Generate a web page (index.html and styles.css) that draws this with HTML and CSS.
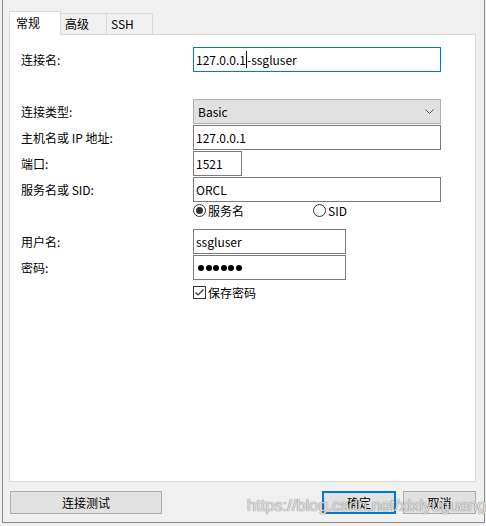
FILE: index.html
```html
<!DOCTYPE html>
<html>
<head>
<meta charset="utf-8">
<link rel="stylesheet" href="styles.css">
</head>
<body>
<div class="window">
  <div class="tabs">
    <div class="tab active">常规</div>
    <div class="tab">高级</div>
    <div class="tab">SSH</div>
  </div>
  <div class="panel">
    <div class="row r-first">
      <div class="label">连接名:</div>
      <div class="input focus w-full"><span>127.0.0.1</span><span class="caret"></span><span>-ssgluser</span></div>
    </div>
    <div class="row r-combo">
      <div class="label">连接类型:</div>
      <div class="combo w-full"><span>Basic</span>
        <svg class="chev" width="9" height="5" viewBox="0 0 9 5"><path d="M0.5 0.5 L4.5 4.5 L8.5 0.5" fill="none" stroke="#555" stroke-width="1"/></svg>
      </div>
    </div>
    <div class="row r-tight">
      <div class="label">主机名或 IP 地址:</div>
      <div class="input w-full">127.0.0.1</div>
    </div>
    <div class="row r-tight">
      <div class="label">端口:</div>
      <div class="input w-port">1521</div>
    </div>
    <div class="row r-tight">
      <div class="label">服务名或 SID:</div>
      <div class="input w-full">ORCL</div>
    </div>
    <div class="row r-radio">
      <div class="label"></div>
      <div class="radio-item first"><span class="radio on"></span><span>服务名</span></div>
      <div class="radio-item"><span class="radio"></span><span>SID</span></div>
    </div>
    <div class="row r-user">
      <div class="label">用户名:</div>
      <div class="input w-user">ssgluser</div>
    </div>
    <div class="row r-tight">
      <div class="label">密码:</div>
      <div class="input w-user pw"><i></i><i></i><i></i><i></i><i></i><i></i></div>
    </div>
    <div class="row r-check">
      <div class="label"></div>
      <div class="check-item">
        <span class="check"><svg width="11" height="11" viewBox="0 0 11 11"><path d="M1.5 5.5 L4 8 L9.5 2.5" fill="none" stroke="#333" stroke-width="1.2"/></svg></span>
        <span>保存密码</span>
      </div>
    </div>
  </div>
  <div class="buttons">
    <div class="btn btn-test">连接测试</div>
    <div class="spacer"></div>
    <div class="btn btn-ok">确定</div>
    <div class="btn btn-cancel">取消</div>
  </div>
  <div class="watermark">https://blog.csdn.net/xixiyuguang</div>
</div>
</body>
</html>
```
FILE: styles.css
```css
html, body {
  margin: 0;
  padding: 0;
  background: #f0f0f0;
}
body {
  width: 486px;
  height: 526px;
  overflow: hidden;
  font-family: "Noto Sans CJK SC", "Noto Sans", sans-serif;
  font-size: 12px;
  color: #000;
}
.window {
  position: relative;
  margin-left: 2px;
  border-left: 1px solid #8c8c8c;
  border-right: 1px solid #8c8c8c;
  border-bottom: 1px solid #8c8c8c;
  padding: 11px 8px 0 6px;
  box-sizing: content-box;
  width: 467px;
  height: 511px;
  background: #f0f0f0;
}
.tabs {
  display: flex;
  align-items: flex-end;
  height: 23px;
  position: relative;
  z-index: 2;
}
.tab {
  box-sizing: border-box;
  height: 21px;
  border: 1px solid #d9d9d9;
  border-bottom: none;
  border-left: none;
  background: #f0f0f0;
  padding-left: 4px;
  line-height: 20px;
  width: 46px;
}
.tab.active {
  height: 24px;
  margin-bottom: -1px;
  border-left: 1px solid #d9d9d9;
  background: #fff;
  width: 52px;
  padding-left: 6px;
  line-height: 21px;
}
.panel {
  box-sizing: border-box;
  width: 467px;
  height: 448px;
  border: 1px solid #d9d9d9;
  background: #fff;
  padding: 12px 0 0 11px;
  position: relative;
  z-index: 1;
}
.row {
  display: flex;
  align-items: center;
  height: 25px;
}
.r-combo { margin-top: 27px; }
.r-tight { margin-top: 1px; }
.r-radio { margin-top: 2px; height: 13px; }
.r-user { margin-top: 12px; }
.r-check { margin-top: 6px; height: 13px; }
.label {
  width: 172px;
  flex: none;
  white-space: nowrap;
}
.input, .combo {
  box-sizing: border-box;
  height: 25px;
  border: 1px solid #7a7a7a;
  background: #fff;
  display: flex;
  align-items: center;
  padding-left: 2px;
  white-space: nowrap;
}
.input.focus { border-color: #0078d7; }
.w-full { width: 248px; }
.w-port { width: 49px; }
.w-user { width: 153px; }
.caret {
  display: inline-block;
  width: 1px;
  height: 17px;
  background: #000;
}
.combo {
  background: #e1e1e1;
  border-color: #adadad;
  padding-left: 4px;
  justify-content: space-between;
  padding-right: 6px;
}
.chev { flex: none; }
.radio-item, .check-item {
  display: flex;
  align-items: center;
  gap: 2px;
}
.radio-item.first { width: 120px; }
.radio {
  box-sizing: border-box;
  width: 13px;
  height: 13px;
  border: 1px solid #333;
  border-radius: 50%;
  display: flex;
  align-items: center;
  justify-content: center;
  background: #fff;
}
.radio.on::after {
  content: "";
  width: 7px;
  height: 7px;
  border-radius: 50%;
  background: #333;
}
.check {
  box-sizing: border-box;
  width: 13px;
  height: 13px;
  border: 1px solid #333;
  display: flex;
  align-items: center;
  justify-content: center;
  background: #fff;
}
.pw { gap: 1.5px; padding-left: 4px; }
.pw i {
  display: block;
  width: 6px;
  height: 6px;
  border-radius: 50%;
  background: #000;
}
.buttons {
  display: flex;
  margin-top: 9px;
  gap: 7px;
}
.spacer { flex: 1; }
.btn {
  box-sizing: border-box;
  height: 23px;
  border: 1px solid #adadad;
  background: #e1e1e1;
  display: flex;
  align-items: center;
  justify-content: center;
}
.btn-test { width: 152px; margin-left: 1px; }
.btn-ok { width: 74px; border: 2px solid #0078d7; }
.btn-cancel { width: 73px; }
.watermark {
  position: absolute;
  left: 244px;
  top: 496px;
  font-family: "Liberation Sans", Arial, sans-serif;
  font-size: 16.5px;
  color: rgba(255, 255, 255, 0.8);
  text-shadow: 0 0 1px rgba(80, 80, 80, 0.8), 0 0 1px rgba(80, 80, 80, 0.5);
  white-space: nowrap;
  z-index: 3;
}
```
